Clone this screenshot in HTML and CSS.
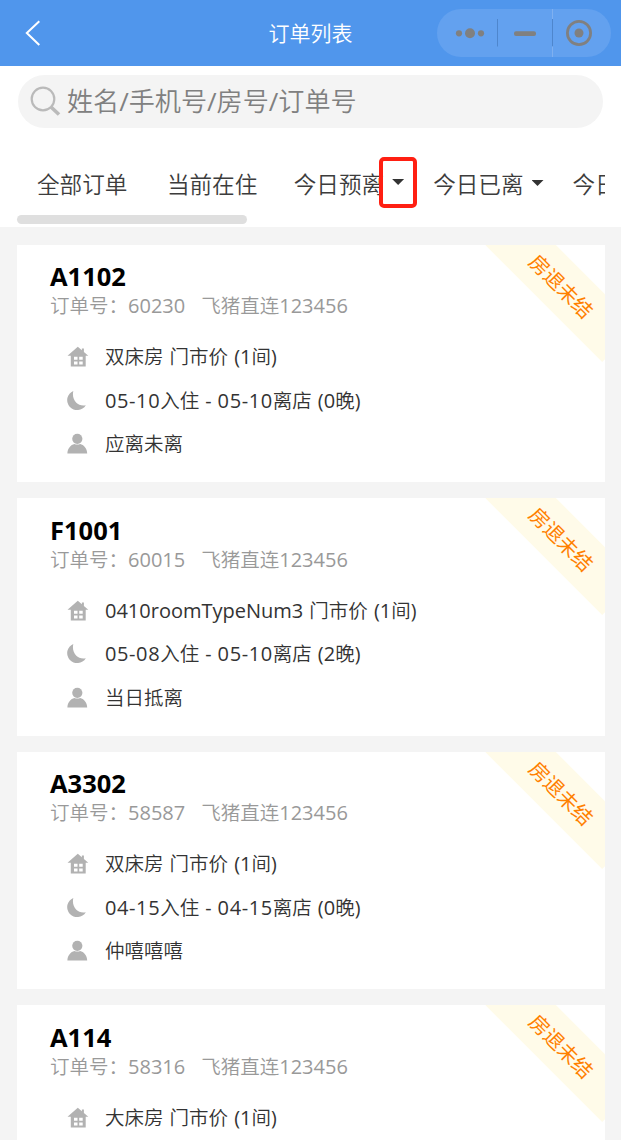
FILE: index.html
```html
<!DOCTYPE html>
<html lang="zh-CN">
<head>
  <meta charset="UTF-8">
  <title>订单列表</title>
  <link rel="stylesheet" href="styles.css">
</head>
<body>
  <!-- icons -->
  <svg class="sprite" aria-hidden="true">
    <symbol id="house" viewBox="0 0 22 22">
      <path fill="#b2b2b2" d="M10.8.8 14.900 4.200V2.500h2v3.400L21.300 9.800H18.700V20.600H3.800V9.800H.5z"/>
      <path fill="#fff" d="M7 10.800h3.500v3H7zM12.200 10.800h3.500v3h-3.500zM7 15.600h3.500v3H7zM12.200 15.600h3.500v3h-3.500z"/>
    </symbol>
    <symbol id="moon" viewBox="0 0 22 22">
      <path fill="#b2b2b2" d="M6.300.900A10 10 0 1 0 18.800 15.200C11.500 17 4.200 10.500 6.300.900z"/>
    </symbol>
    <symbol id="person" viewBox="0 0 22 22">
      <circle cx="10.300" cy="5.800" r="5.100" fill="#b2b2b2"/>
      <path fill="#b2b2b2" d="M.4 20.600C.4 15.200 3.900 11.700 7.400 10.900q2.900 1.300 5.800 0c3.500.8 7 4.300 7 9.700z"/>
    </symbol>
  </svg>

  <!-- HEADER -->
  <header class="header">
    <svg class="back" width="16" height="26" viewBox="0 0 16 26"><path d="M14.300 1.200 1.800 13 14.300 25" fill="none" stroke="#fff" stroke-width="2"/></svg>
    <h1>订单列表</h1>
    <div class="capsule">
      <svg width="174" height="48" viewBox="0 0 174 48">
        <g fill="#808080">
          <circle cx="22" cy="24.300" r="3.100"/>
          <circle cx="33" cy="24.300" r="5"/>
          <circle cx="44" cy="24.300" r="3.100"/>
          <rect x="77" y="22.300" width="22" height="4.600" rx="2"/>
          <circle cx="142" cy="24" r="4.500"/>
        </g>
        <circle cx="142" cy="24" r="11.600" fill="none" stroke="#808080" stroke-width="2.800"/>
        <path d="M60.500 10v27.500M115.500 10v27.500" stroke="#4e86cd"/>
        <path d="M115.500 0v10M115.500 37.500V48" stroke="#7fb0f0"/>
      </svg>
    </div>
  </header>

  <!-- SEARCH + TABS -->
  <div class="top">
    <div class="search">
      <svg width="32" height="32" viewBox="0 0 32 32" fill="none" stroke="#bababa"><circle cx="13" cy="13" r="11.300" stroke-width="2.200"/><path d="M21 21l8 7.500" stroke-width="3.600"/></svg>
      <span>姓名/手机号/房号/订单号</span>
    </div>
    <nav class="tabs">
      <div class="tab">全部订单</div>
      <div class="tab">当前在住</div>
      <div class="tab">今日预离<span class="caret marked"></span></div>
      <div class="tab">今日已离<span class="caret"></span></div>
      <div class="tab">今日</div>
    </nav>
    <div class="scrollbar"></div>
  </div>

  <!-- ORDERS -->
  <main class="orders">
    <div class="card">
      <div class="ribbon">房退未结</div>
      <h2>A1102</h2>
      <p class="order-no"><span>订单号：<b>60230</b></span><span>飞猪直连<b>123456</b></span></p>
      <ul>
        <li><svg><use href="#house"/></svg><span>双床房 门市价 <b>(1</b>间)</span></li>
        <li><svg><use href="#moon"/></svg><span><b class="date">05-10</b>入住 - <b class="date">05-10</b>离店 <b>(0</b>晚)</span></li>
        <li><svg><use href="#person"/></svg><span>应离未离</span></li>
      </ul>
    </div>
    <div class="card">
      <div class="ribbon">房退未结</div>
      <h2>F1001</h2>
      <p class="order-no"><span>订单号：<b>60015</b></span><span>飞猪直连<b>123456</b></span></p>
      <ul>
        <li><svg><use href="#house"/></svg><span><b>0410roomTypeNum3</b> 门市价 <b>(1</b>间)</span></li>
        <li><svg><use href="#moon"/></svg><span><b class="date">05-08</b>入住 - <b class="date">05-10</b>离店 <b>(2</b>晚)</span></li>
        <li><svg><use href="#person"/></svg><span>当日抵离</span></li>
      </ul>
    </div>
    <div class="card">
      <div class="ribbon">房退未结</div>
      <h2>A3302</h2>
      <p class="order-no"><span>订单号：<b>58587</b></span><span>飞猪直连<b>123456</b></span></p>
      <ul>
        <li><svg><use href="#house"/></svg><span>双床房 门市价 <b>(1</b>间)</span></li>
        <li><svg><use href="#moon"/></svg><span><b class="date">04-15</b>入住 - <b class="date">04-15</b>离店 <b>(0</b>晚)</span></li>
        <li><svg><use href="#person"/></svg><span>仲嘻嘻嘻</span></li>
      </ul>
    </div>
    <div class="card">
      <div class="ribbon">房退未结</div>
      <h2>A114</h2>
      <p class="order-no"><span>订单号：<b>58316</b></span><span>飞猪直连<b>123456</b></span></p>
      <ul>
        <li><svg><use href="#house"/></svg><span>大床房 门市价 <b>(1</b>间)</span></li>
      </ul>
    </div>
  </main>
</body>
</html>
```
FILE: styles.css
```css
* { box-sizing: border-box; margin: 0; padding: 0; }
body {
  display: flex;
  flex-direction: column;
  height: 1140px;
  overflow: hidden;
  background: #f4f4f4;
  color: #333;
  font-family: "Open Sans", "Noto Sans CJK SC DemiLight", "Noto Sans CJK SC", sans-serif;
}
.sprite { display: none; }

/* Header */
.header {
  display: grid;
  flex: none;
  grid-template-columns: 1fr auto 1fr;
  align-items: center;
  height: 66px;
  padding: 0 10px 0 25px;
  background: #5096ec;
}
.header h1 {
  padding-right: 15px;
  color: #fff;
  font-size: 21px;
  font-weight: 400;
  line-height: 30px;
}
.capsule {
  justify-self: end;
  width: 174px;
  height: 48px;
  border-radius: 24px;
  background: #63a1ef;
}
.capsule svg { display: block; }

/* Search and tabs */
.top {
  flex: none;
  height: 161px;
  padding: 9px 17px 0;
  background: #fff;
}
.search {
  display: flex;
  align-items: center;
  height: 53px;
  margin: 0 1px;
  padding-left: 12px;
  border-radius: 27px;
  background: #f4f4f4;
  color: #808080;
  font-size: 26.1px;
  line-height: 50px;
}
.search svg { margin-right: 5px; }
.search span { padding-bottom: 2px; }
.tabs {
  display: flex;
  height: 87px;
  margin-right: -1px;
  padding-left: 20px;
  gap: 39.5px;
  overflow: hidden;
  color: #3c3c3c;
  font-size: 22.6px;
}
.tab {
  display: flex;
  flex: none;
  align-items: center;
  height: 110px;
}
.tab:nth-child(3) { margin-left: -3px; }
.tab:nth-child(4), .tab:nth-child(5) { margin-left: -10.5px; }
.caret {
  width: 12px;
  height: 6px;
  margin-left: 8px;
  background: #333;
  clip-path: polygon(0 0, 100% 0, 50% 100%);
}
.marked {
  width: 38px;
  height: 51px;
  margin: -1px -13px 0 -5px;
  border: 4px solid #ff1f12;
  border-radius: 5px;
  background: none;
  clip-path: none;
}
.marked::before {
  content: "";
  display: block;
  width: 12px;
  height: 6px;
  margin: 18px 0 0 9px;
  background: #333;
  clip-path: polygon(0 0, 100% 0, 50% 100%);
}
.scrollbar {
  width: 230px;
  height: 9px;
  border-radius: 5px;
  background: #dfdfdf;
}

/* Order cards */
.orders {
  display: flex;
  flex: 1;
  flex-direction: column;
  gap: 16px;
  min-height: 0;
  padding: 17.7px 16px 0 17px;
  overflow: hidden;
}
.card {
  position: relative;
  flex: none;
  height: 237.5px;
  padding: 15.5px 33px 0;
  overflow: hidden;
  background: #fff;
}
.card:last-child {
  flex: 1;
  min-height: 0;
}
.card h2 {
  color: #000;
  font-size: 25.5px;
  font-weight: 700;
  line-height: 33px;
}
.order-no {
  display: flex;
  gap: 16px;
  color: #999;
  font-size: 19.5px;
  line-height: 26px;
}
.order-no b { font-weight: 400; font-size: 20px; }
.card ul {
  padding: 16.5px 0 0 17px;
  list-style: none;
}
.card li {
  display: flex;
  align-items: center;
  height: 43.5px;
  font-size: 19.5px;
  line-height: 26px;
  white-space: pre;
  word-spacing: 1px;
}
.card li b {
  font-size: 20px;
  font-weight: 400;
}
.card li .date { letter-spacing: .6px; }
.card li svg {
  width: 22px;
  height: 22px;
  margin-right: 16px;
}
.ribbon {
  position: absolute;
  top: 16px;
  right: -39px;
  width: 165px;
  height: 50px;
  background: #fffbe9;
  color: #ff8000;
  font-family: "Noto Sans CJK SC", sans-serif;
  font-size: 20px;
  line-height: 49px;
  text-align: center;
  transform: rotate(45deg);
}
```
